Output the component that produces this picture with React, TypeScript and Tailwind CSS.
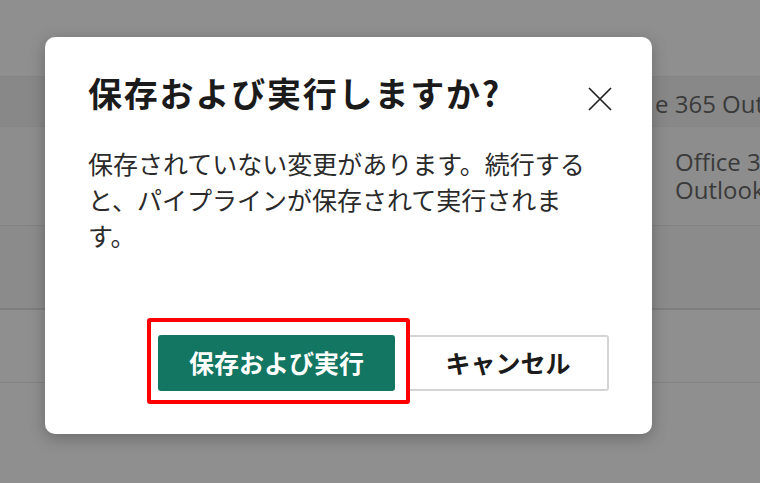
const jp = { fontFamily: '"Noto Sans CJK JP", "Noto Sans", sans-serif' };
const latin = { fontFamily: '"Open Sans", "Liberation Sans", sans-serif' };

function Backdrop() {
  return (
    <div className="flex h-full w-full flex-col bg-[#8f8f8f] text-[#3a3a3a]" style={latin}>
      <div className="h-[77px] border-b border-[#858585]" />
      <div className="flex h-[50px] items-center overflow-hidden border-b border-[#858585] bg-[#888888] pl-[655px] pt-[4px] text-[24px]">
        <span className="whitespace-nowrap">e 365 Out</span>
      </div>
      <div className="flex h-[99px] items-center border-b border-[#828282] bg-[#8d8d8d]">
        <div className="ml-[652px] h-[20px] w-[3px] bg-[#2b62a8]" />
        <div className="ml-[23px] whitespace-nowrap text-[24px] leading-[28px]">
          <div>Office 3</div>
          <div>Outlook</div>
        </div>
      </div>
      <div className="h-[84px] border-b-2 border-[#7e7e7e] bg-[#8b8b8b]" />
      <div className="h-[73px] border-b border-[#828282] bg-[#8f8f8f]" />
      <div className="flex-1 bg-[#8f8f8f]" />
    </div>
  );
}

export default function App() {
  return (
    <div className="relative h-[483px] w-[760px] overflow-hidden">
      <Backdrop />
      <div
        className="absolute left-[45px] top-[37px] flex h-[397px] w-[607px] flex-col rounded-[10px] bg-white px-[43px] pt-[33px] shadow-[0_4px_16px_rgba(0,0,0,0.25)]"
        style={jp}
      >
        <div className="flex items-start justify-between">
          <h1 className="text-[34px] font-bold leading-[46px] tracking-[1.8px] text-[#1b1b1b]">
            保存および実行しますか?
          </h1>
          <button className="-mr-[3px] mt-[17px] text-[#222]">
            <svg width="24" height="24" viewBox="0 0 24 24" fill="none" stroke="currentColor" strokeWidth="1.7">
              <path d="M1 1L23 23M23 1L1 23" />
            </svg>
          </button>
        </div>
        <p className="mt-[29px] w-[505px] text-[25px] leading-[36px] text-[#2a2a2a]">
          保存されていない変更があります。続行すると、パイプラインが保存されて実行されます。
        </p>
        <div className="mt-auto mb-[43px] flex justify-end gap-[12px]">
          <div className="relative">
            <button className="h-[56px] w-[237px] rounded-[3px] bg-[#127662] text-[25px] font-bold text-white">
              保存および実行
            </button>
            <div className="absolute -left-[11px] -top-[17px] h-[86px] w-[263px] rounded-[3px] border-[4px] border-[#ff0000]" />
          </div>
          <button className="h-[56px] w-[202px] rounded-[3px] border-2 border-[#d4d4d4] bg-white text-[25px] font-bold text-[#1b1b1b]">
            キャンセル
          </button>
        </div>
      </div>
    </div>
  );
}
